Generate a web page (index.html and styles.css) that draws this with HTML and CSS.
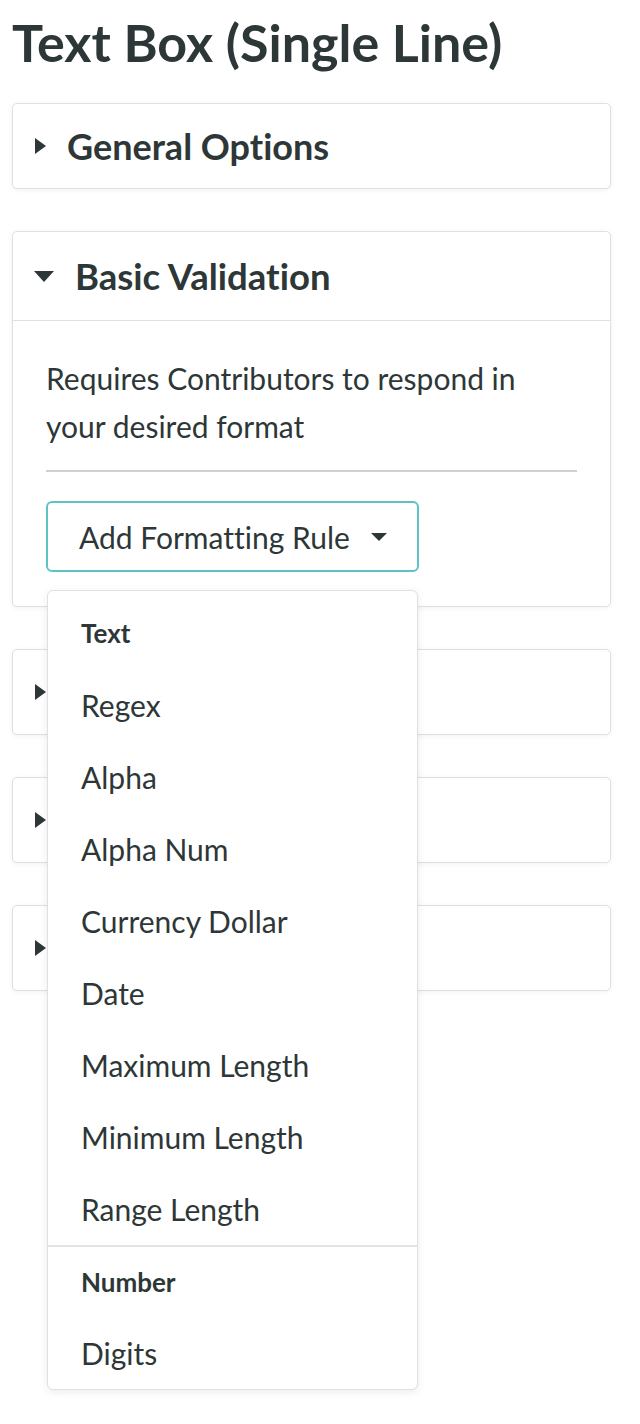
FILE: index.html
```html
<!DOCTYPE html>
<html lang="en">
<head>
  <meta charset="UTF-8">
  <meta name="viewport" content="width=device-width, initial-scale=1.0">
  <title>Text Box (Single Line)</title>
  <link rel="stylesheet" href="styles.css">
</head>
<body>
  <div class="page">
    <h1 class="title">Text Box (Single Line)</h1>

    <div class="panel">
      <div class="panel-head">
        <svg class="caret-right" width="11" height="16" viewBox="0 0 11 16"><path d="M0 0 L11 8 L0 16 Z"/></svg>
        <span>General Options</span>
      </div>
    </div>

    <div class="panel open">
      <div class="panel-head">
        <svg class="caret-down" width="20" height="11" viewBox="0 0 20 11"><path d="M0 0 L20 0 L10 11 Z"/></svg>
        <span>Basic Validation</span>
      </div>
      <div class="panel-body">
        <p class="hint">Requires Contributors to respond in your desired format</p>
        <hr class="sep">
        <div class="rule-select">
          <button class="rule-btn">
            Add Formatting Rule
            <svg class="btn-caret" width="16" height="8" viewBox="0 0 16 8"><path d="M0 0 L16 0 L8 8 Z"/></svg>
          </button>
          <div class="menu">
            <div class="menu-group">
              <div class="menu-label">Text</div>
              <div class="menu-item">Regex</div>
              <div class="menu-item">Alpha</div>
              <div class="menu-item">Alpha Num</div>
              <div class="menu-item">Currency Dollar</div>
              <div class="menu-item">Date</div>
              <div class="menu-item">Maximum Length</div>
              <div class="menu-item">Minimum Length</div>
              <div class="menu-item">Range Length</div>
            </div>
            <div class="menu-group">
              <div class="menu-label">Number</div>
              <div class="menu-item">Digits</div>
            </div>
          </div>
        </div>
      </div>
    </div>

    <!-- titles of these three sit under the open menu -->
    <div class="panel">
      <div class="panel-head">
        <svg class="caret-right" width="11" height="16" viewBox="0 0 11 16"><path d="M0 0 L11 8 L0 16 Z"/></svg>
      </div>
    </div>

    <div class="panel">
      <div class="panel-head">
        <svg class="caret-right" width="11" height="16" viewBox="0 0 11 16"><path d="M0 0 L11 8 L0 16 Z"/></svg>
      </div>
    </div>

    <div class="panel">
      <div class="panel-head">
        <svg class="caret-right" width="11" height="16" viewBox="0 0 11 16"><path d="M0 0 L11 8 L0 16 Z"/></svg>
      </div>
    </div>
  </div>
</body>
</html>
```

FILE: styles.css
```css
body {
  margin: 0;
  background: #fff;
  font-family: Lato, "Open Sans", sans-serif;
  font-variant-ligatures: none;
  color: #2e3737;
}
.page {
  width: 599px;
  min-height: 1424px;
  padding: 0 0 0 12px;
}
.title {
  font-size: 52px;
  font-weight: bold;
  margin: 0 0 29px;
  padding: 10px 0 0;
  line-height: 64px;
}
.panel {
  background: #fff;
  border: 1px solid #dfdfe4;
  border-radius: 5px;
  box-shadow: 0 1px 5px rgba(0,0,0,0.06);
  margin-bottom: 42px;
}
.panel-head {
  height: 84px;
  display: flex;
  align-items: center;
  padding-left: 22px;
  font-size: 36px;
  font-weight: bold;
}
.panel-head span {
  margin-left: 21px;
}
.caret-right, .caret-down, .btn-caret {
  fill: #2e3737;
}
.open .panel-head {
  height: 88px;
  padding-left: 21px;
  border-bottom: 1px solid #dfdfe4;
}
.open .panel-head span {
  font-size: 36.5px;
}
.panel-body {
  padding: 33px 33px 34px 33px;
}
.hint {
  margin: 0;
  max-width: 500px;
  font-size: 30px;
  line-height: 48px;
}
.sep {
  border: 0;
  border-top: 2px solid #d0d0d0;
  margin: 20px 0 29px;
}
.rule-select {
  position: relative;
}
.rule-btn {
  display: flex;
  align-items: center;
  width: 373px;
  height: 71px;
  padding: 0 0 0 31px;
  background: #fff;
  border: 2px solid #5ec3c7;
  border-radius: 6px;
  font-family: inherit;
  font-variant-ligatures: none;
  font-size: 30px;
  color: #2e3737;
}
.btn-caret {
  margin-left: 21px;
}
.menu {
  position: absolute;
  top: 89px;
  left: 1px;
  width: 369px;
  background: #fff;
  border: 1px solid #dfdfe4;
  border-radius: 6px;
  box-shadow: 0 2px 8px rgba(0,0,0,0.08);
  padding-top: 6px;
  z-index: 2;
}
.menu-group + .menu-group {
  border-top: 2px solid #e4e4e8;
}
.menu-label, .menu-item {
  height: 72px;
  line-height: 72px;
  padding-left: 33px;
}
.menu-group + .menu-group .menu-label {
  height: 70px;
  line-height: 70px;
}
.menu-label {
  font-size: 26px;
  font-weight: bold;
}
.menu-item {
  font-size: 30px;
}
```
